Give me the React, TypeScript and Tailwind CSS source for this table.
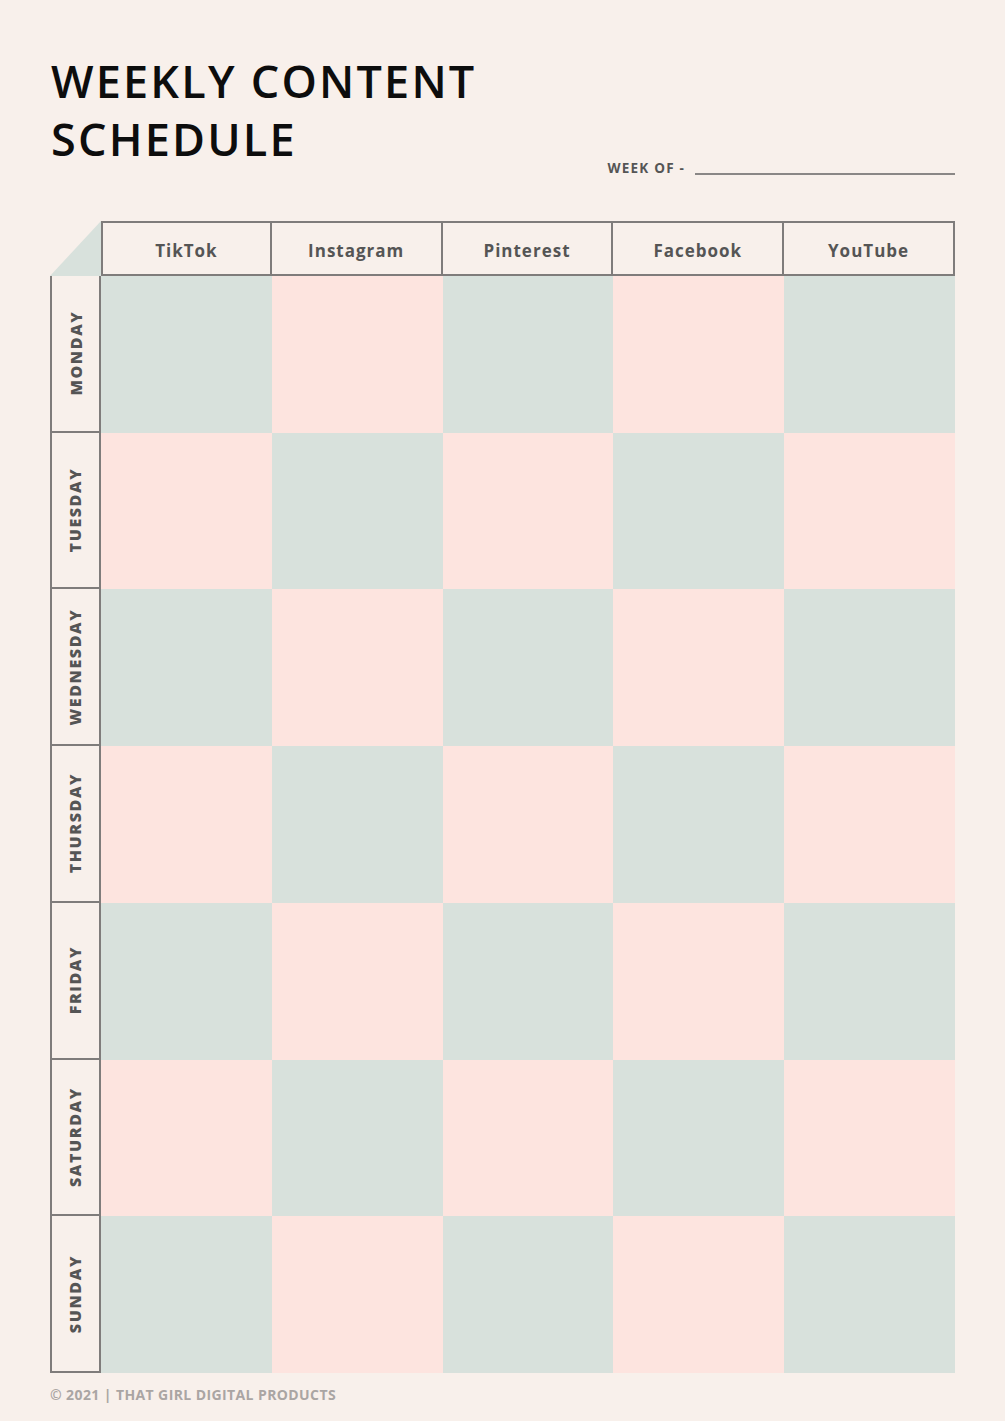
const platforms = ['TikTok', 'Instagram', 'Pinterest', 'Facebook', 'YouTube']
const days = ['MONDAY', 'TUESDAY', 'WEDNESDAY', 'THURSDAY', 'FRIDAY', 'SATURDAY', 'SUNDAY']

export default function App() {
  return (
    <div
      className="w-[1005px] h-[1421px] bg-[#f8f0eb] px-[50px] pt-[52px] text-[#555]"
      style={{ fontFamily: '"Open Sans", "DejaVu Sans", sans-serif' }}
    >
      {/* Title + week of */}
      <div className="flex justify-between items-end">
        <h1 className="pl-[1px] text-[45px] leading-[58px] font-semibold tracking-[2.2px] text-[#0d0d0d]">
          WEEKLY CONTENT
          <br />
          SCHEDULE
        </h1>
        <div className="flex items-end gap-[10px] -mb-[7px]">
          <span className="text-[13.5px] font-bold tracking-[1.2px] text-[#555] leading-none">WEEK OF -</span>
          <div className="w-[260px] h-[2px] bg-[#8a8786]" />
        </div>
      </div>

      {/* Table */}
      <div className="mt-[53px] grid grid-cols-[51px_repeat(5,1fr)] grid-rows-[55px_repeat(7,1fr)] h-[1152px]">
        <div className="relative">
          <svg className="absolute inset-0 w-full h-full" viewBox="0 0 51 55" preserveAspectRatio="none">
            <polygon points="51,0 51,55 0,55" fill="#d8e1dc" />
          </svg>
        </div>
        {platforms.map((p, i) => (
          <div
            key={p}
            className={`flex items-center justify-center pt-[4px] border-t-2 border-b-2 border-r-2 border-[#7f7c7b] text-[17px] font-bold tracking-[1px] text-[#555] ${i === 0 ? 'border-l-2' : ''}`}
          >
            {p}
          </div>
        ))}
        {days.map((d, r) => (
          <>
            <div
              key={d}
              className="flex items-center justify-center border-l-2 border-r-2 border-b-2 border-[#7f7c7b]"
            >
              <span className="-rotate-90 whitespace-nowrap text-[16px] font-extrabold tracking-[1.6px] text-[#555]">{d}</span>
            </div>
            {platforms.map((p, c) => (
              <div key={d + p} className={(r + c) % 2 === 0 ? 'bg-[#d8e1dc]' : 'bg-[#fde4df]'} />
            ))}
          </>
        ))}
      </div>

      <p className="mt-[11px] text-[14px] font-bold tracking-[0.4px] text-[#aaa5a3]">
        © 2021 | THAT GIRL DIGITAL PRODUCTS
      </p>
    </div>
  )
}
